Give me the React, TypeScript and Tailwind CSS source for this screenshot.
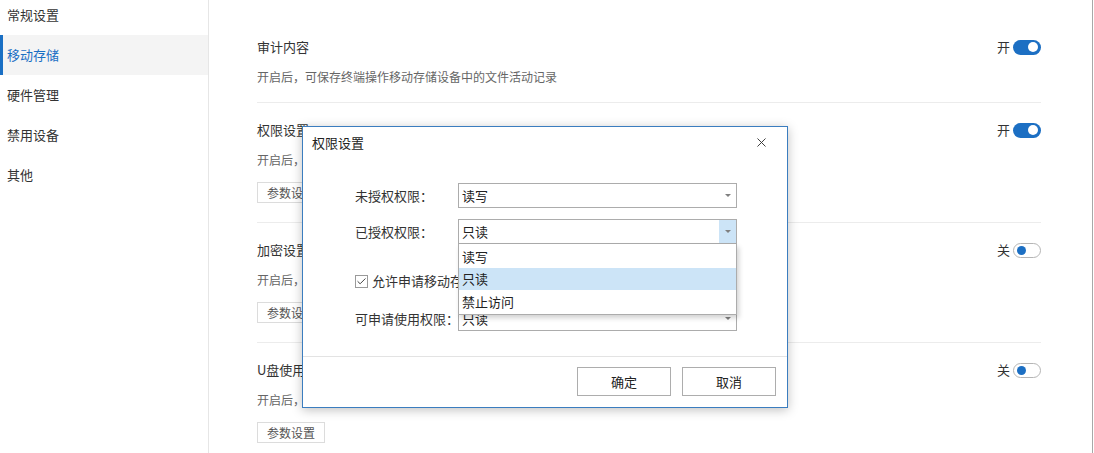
import { X, Check } from 'lucide-react';

const font = { fontFamily: '"Noto Sans CJK SC", "Noto Sans", sans-serif' };

const navItems = ['常规设置', '移动存储', '硬件管理', '禁用设备', '其他'];

function Toggle({ on }: { on: boolean }) {
  return (
    <div className="flex items-center gap-[3px]">
      <span className="text-[13px] leading-5 text-[#333]">{on ? '开' : '关'}</span>
      {on ? (
        <div className="flex h-[15px] w-[28px] items-center justify-end rounded-full bg-[#1c6fc3] pr-[3px]">
          <div className="h-[10px] w-[10px] rounded-full bg-white" />
        </div>
      ) : (
        <div className="flex h-[15px] w-[28px] items-center rounded-full border border-[#b5b5b5] bg-white pl-[3px]">
          <div className="h-[9px] w-[9px] rounded-full bg-[#1c6fc3]" />
        </div>
      )}
    </div>
  );
}

interface SectionProps {
  title: string;
  desc: string;
  on: boolean;
  button?: boolean;
  first?: boolean;
  last?: boolean;
}

function Section({ title, desc, on, button = true, first, last }: SectionProps) {
  return (
    <div className={`${first ? 'pt-[37px] pb-[15px]' : 'pt-[17px] pb-[19px]'} ${last ? '' : 'border-b border-[#ececec]'}`}>
      <div className="flex h-5 items-center justify-between">
        <span className="text-[13px] leading-5 text-[#333]">{title}</span>
        <Toggle on={on} />
      </div>
      <div className="mt-[10px] text-[12px] leading-5 text-[#666]">{desc}</div>
      {button && (
        <div className="mt-[12px] flex h-[21px] w-[68px] items-center justify-center border border-[#dcdcdc] text-[12px] text-[#555]">
          参数设置
        </div>
      )}
    </div>
  );
}

function Select({ value, active }: { value: string; active?: boolean }) {
  return (
    <div className="flex h-[25px] w-[279px] items-center border border-[#acacac] bg-white">
      <span className="flex-1 pl-[3px] text-[13px] leading-5 text-[#222]">{value}</span>
      <div className={`flex h-full w-[17px] items-center justify-center ${active ? 'bg-[#cce4f7]' : ''}`}>
        <div className="h-0 w-0 border-x-[3px] border-t-[3px] border-x-transparent border-t-[#808080]" />
      </div>
    </div>
  );
}

export default function App() {
  return (
    <div className="relative flex h-[453px] w-[1094px] overflow-hidden bg-white" style={font}>
      {/* sidebar */}
      <div className="w-[209px] shrink-0 border-r border-[#e6e6e6]">
        <div className="-mt-[5px]">
          {navItems.map((item, i) => (
            <div
              key={item}
              className={`flex h-10 items-center text-[13px] ${
                i === 1 ? 'border-l-[3px] border-[#1a6fc4] bg-[#f4f4f4] pl-[4px] text-[#1a6fc4]' : 'pl-[7px] text-[#333]'
              }`}
            >
              {item}
            </div>
          ))}
        </div>
      </div>

      {/* main */}
      <div className="flex-1 pl-[48px] pr-[51px]">
        <Section first title="审计内容" desc="开启后，可保存终端操作移动存储设备中的文件活动记录" on button={false} />
        <Section title="权限设置" desc="开启后，可设置终端对移动存储设备的访问权限" on />
        <Section title="加密设置" desc="开启后，可对移动存储设备进行加密" on={false} />
        <Section last title="U盘使用审批" desc="开启后，终端可申请使用移动存储设备" on={false} />
      </div>
      <div className="w-px shrink-0 bg-[#a8a8a8]" />
      <div className="w-px shrink-0" />

      {/* dialog */}
      <div className="absolute left-[302px] top-[126px] w-[486px] border border-[#3b7dbf] bg-white shadow-[0_2px_10px_rgba(0,0,0,0.25)]">
        <div className="flex h-[31px] items-center justify-between pl-[9px] pr-[18px]">
          <span className="text-[13px] text-[#222]">权限设置</span>
          <X className="h-[15px] w-[15px] text-[#333]" strokeWidth={1.5} />
        </div>

        <div className="relative pl-[52px] pt-[25px] pb-[25px]">
          <div className="flex items-center">
            <span className="w-[103px] whitespace-nowrap text-[13px] text-[#333]">未授权权限：</span>
            <Select value="读写" />
          </div>
          <div className="mt-[11px] flex items-center">
            <span className="w-[103px] whitespace-nowrap text-[13px] text-[#333]">已授权权限：</span>
            <div className="relative">
              <Select value="只读" active />
              <div className="absolute left-0 top-[25px] z-10 w-[279px] border border-t-0 border-[#acacac] bg-white py-px shadow-[2px_3px_5px_rgba(0,0,0,0.18)]">
                <div className="flex h-[23px] items-center pl-[3px] text-[13px] text-[#222]">读写</div>
                <div className="flex h-[22px] items-center bg-[#cce4f7] pl-[3px] text-[13px] text-[#222]">只读</div>
                <div className="flex h-[23px] items-center pl-[3px] text-[13px] text-[#222]">禁止访问</div>
              </div>
            </div>
          </div>
          <div className="mt-[25px] flex h-6 items-center gap-[4px]">
            <div className="flex h-[13px] w-[13px] shrink-0 items-center justify-center border border-[#9a9a9a] bg-white">
              <Check className="h-[11px] w-[11px] text-[#333]" strokeWidth={2} />
            </div>
            <span className="w-[88px] overflow-hidden whitespace-nowrap text-[13px] text-[#333]">允许申请移动存储设备</span>
          </div>
          <div className="mt-[13px] flex items-center">
            <span className="w-[103px] whitespace-nowrap text-[13px] text-[#333]">可申请使用权限：</span>
            <Select value="只读" />
          </div>
        </div>

        <div className="flex justify-end gap-[11px] border-t border-[#e3e3e3] pt-[10px] pb-[11px] pr-[11px]">
          <div className="flex h-[29px] w-[94px] items-center justify-center border border-[#adadad] text-[13px] text-[#222]">确定</div>
          <div className="flex h-[29px] w-[94px] items-center justify-center border border-[#adadad] text-[13px] text-[#222]">取消</div>
        </div>
      </div>
    </div>
  );
}
